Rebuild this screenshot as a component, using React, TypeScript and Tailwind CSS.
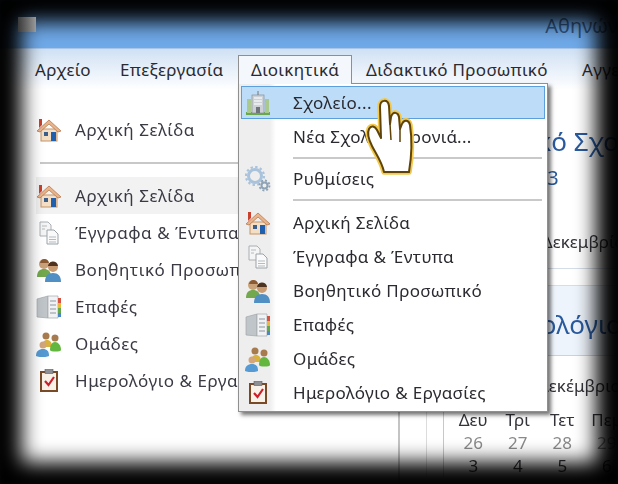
const font = "font-['Noto_Sans','Open_Sans',sans-serif]";

function HomeIcon() {
  return (
    <svg width="26" height="26" viewBox="0 0 26 26" className="shrink-0">
      <rect x="5" y="12" width="16" height="12" fill="#f4dfc4" stroke="#c4946a" />
      <path d="M1 14 L13 3 L25 14 L22 15 L13 7 L4 15 Z" fill="#e8b48c" stroke="#b97a50" strokeWidth="0.8" />
      <path d="M3 2 h3 v6 l-3 3 Z" fill="#c9402c" />
      <rect x="8" y="15" width="4" height="4" fill="#3b5f8a" />
      <rect x="15" y="15" width="5" height="9" fill="#1f5fae" />
    </svg>
  );
}

function DocsIcon() {
  return (
    <svg width="26" height="26" viewBox="0 0 26 26" className="shrink-0">
      <path d="M4 2 h8 l3 3 v11 H4 Z" fill="#f5f5f5" stroke="#aab0b5" />
      <path d="M11 10 h7 l4 4 v10 H11 Z" fill="#fafafa" stroke="#9ca3a8" />
      <path d="M13 17 h7 M13 19.5 h7 M13 22 h7 M6 6 h5 M6 9 h3" stroke="#b5bbc0" />
    </svg>
  );
}

function HelpersIcon() {
  return (
    <svg width="26" height="26" viewBox="0 0 26 26" className="shrink-0">
      <circle cx="8" cy="7" r="5" fill="#c9a27a" />
      <path d="M8 2 a5 5 0 0 1 5 4 h-9 a5 5 0 0 1 4 -4" fill="#8a5a34" />
      <path d="M1 20 c0 -6 3 -8 7 -8 s7 2 7 8 Z" fill="#73a84e" />
      <circle cx="17" cy="10" r="5" fill="#c89a72" />
      <path d="M12 10 a5 5 0 0 1 10 -1 h-10" fill="#4d3220" />
      <path d="M9 25 c0 -6 3 -9 8 -9 s8 3 8 9 Z" fill="#4f8fc4" />
    </svg>
  );
}

function ContactsIcon() {
  return (
    <svg width="26" height="26" viewBox="0 0 26 26" className="shrink-0">
      <path d="M1 5 L12 2 V24 L1 23 Z" fill="#c0c5c9" stroke="#a0a6aa" strokeWidth="0.7" />
      <path d="M12 2 H22 V24 H12 Z" fill="#f1f2f3" stroke="#a0a6aa" strokeWidth="0.7" />
      <path d="M14 7 h6 M14 11 h6 M14 15 h6 M14 19 h6" stroke="#8b96a0" />
      <rect x="22" y="4" width="3" height="5" fill="#d8503f" />
      <rect x="22" y="9" width="3" height="5" fill="#e9b93a" />
      <rect x="22" y="14" width="3" height="5" fill="#63a84a" />
      <rect x="22" y="19" width="3" height="4" fill="#4b86c6" />
    </svg>
  );
}

function GroupsIcon() {
  return (
    <svg width="26" height="26" viewBox="0 0 26 26" className="shrink-0">
      <circle cx="10" cy="5" r="3.5" fill="#a77b4e" />
      <circle cx="19" cy="7" r="3.5" fill="#a77b4e" />
      <path d="M6 16 c0 -5 2 -7 5 -7 s5 2 5 7 Z" fill="#d8b23c" />
      <path d="M14 19 c0 -5 2 -8 5 -8 s6 3 6 8 c0 2 -11 2 -11 0" fill="#63b73f" />
      <circle cx="7" cy="14" r="3.5" fill="#d3a67c" />
      <path d="M0 25 c0 -5 3 -7 7 -7 s6 2 6 7 c-2 1.5 -11 1.5 -13 0" fill="#559ad2" />
    </svg>
  );
}

function ClipboardIcon() {
  return (
    <svg width="26" height="26" viewBox="0 0 26 26" className="shrink-0">
      <rect x="5" y="4" width="16" height="19" fill="#f8f2e8" stroke="#7a4a26" strokeWidth="2" />
      <rect x="9" y="1.5" width="8" height="4" fill="#8d9094" stroke="#5c5c5c" strokeWidth="0.6" />
      <path d="M9 13 L12.5 17 L18 9" fill="none" stroke="#d01f2a" strokeWidth="2.2" />
    </svg>
  );
}

function SchoolIcon() {
  return (
    <svg width="26" height="26" viewBox="0 0 26 26" className="shrink-0">
      <rect x="1" y="22" width="24" height="3" fill="#6aa84f" />
      <rect x="2" y="9" width="4" height="14" fill="#a9c98f" />
      <rect x="20" y="9" width="4" height="14" fill="#a9c98f" />
      <rect x="7" y="5" width="12" height="18" fill="#cdd1d5" stroke="#8b9196" strokeWidth="0.7" />
      <path d="M9 8 h8 M9 11 h8 M9 14 h8" stroke="#f1f3f5" strokeWidth="1.5" />
      <rect x="11" y="17" width="4" height="6" fill="#6e7479" />
      <rect x="12.5" y="1" width="1" height="4" fill="#777" />
    </svg>
  );
}

function GearsIcon() {
  return (
    <svg width="26" height="26" viewBox="0 0 26 26" className="shrink-0">
      <circle cx="10" cy="10" r="6.5" fill="none" stroke="#a9c3dc" strokeWidth="3" />
      <circle cx="10" cy="10" r="9" fill="none" stroke="#a9c3dc" strokeWidth="2.2" strokeDasharray="2.4 2.3" />
      <circle cx="19.5" cy="19.5" r="3" fill="none" stroke="#8ea3b5" strokeWidth="2" />
      <circle cx="19.5" cy="19.5" r="5" fill="none" stroke="#8ea3b5" strokeWidth="1.8" strokeDasharray="2 1.9" />
    </svg>
  );
}

const handPath =
  "M22 76 C20 66 14 58 10 50 C7 44 5 37 7 33 C9 29 13 30 15 34 L19 42 L18 11 C18 3 26 3 27 10 L28 28 L29 21 C31 15 36 16 37 21 L38 33 L40 28 C42 23 47 24 48 29 C50 42 50 58 47 76 Z";

function HandCursor() {
  return (
    <svg width="60" height="85" viewBox="0 0 60 85" className="absolute left-[362px] top-[96px]">
      <path d={handPath} fill="#ffffff" stroke="#f2c94c" strokeWidth="5.5" strokeLinejoin="round" />
      <path d={handPath} fill="#ffffff" stroke="#5f4308" strokeWidth="2" strokeLinejoin="round" />
      <path d="M28 28 L29 44 M38 33 L38 46" stroke="#5f4308" strokeWidth="1.5" fill="none" />
    </svg>
  );
}

const sideRows = [
  { icon: <HomeIcon />, label: "Αρχική Σελίδα", hover: true },
  { icon: <DocsIcon />, label: "Έγγραφα & Έντυπα" },
  { icon: <HelpersIcon />, label: "Βοηθητικό Προσωπικό" },
  { icon: <ContactsIcon />, label: "Επαφές" },
  { icon: <GroupsIcon />, label: "Ομάδες" },
  { icon: <ClipboardIcon />, label: "Ημερολόγιο & Εργασίες" },
];

const menuRows = [
  { icon: <HomeIcon />, label: "Αρχική Σελίδα" },
  { icon: <DocsIcon />, label: "Έγγραφα & Έντυπα" },
  { icon: <HelpersIcon />, label: "Βοηθητικό Προσωπικό" },
  { icon: <ContactsIcon />, label: "Επαφές" },
  { icon: <GroupsIcon />, label: "Ομάδες" },
  { icon: <ClipboardIcon />, label: "Ημερολόγιο & Εργασίες" },
];

function MenuRow({ icon, label, selected }: { icon?: React.ReactNode; label: string; selected?: boolean }) {
  return (
    <div
      className={
        selected
          ? "flex h-[33px] items-center border border-[#5b9fdc] bg-[#bcdcf8] pl-[3px]"
          : "flex h-[34px] items-center pl-[4px]"
      }
    >
      <div className="w-[48px] shrink-0">{icon}</div>
      <span className="text-[17px] tracking-[0.35px] whitespace-nowrap text-[#2a2a30]">{label}</span>
    </div>
  );
}

function MenuSep() {
  return <div className="my-[3px] ml-[52px] mr-[3px] h-[2px] bg-[#c9c9c9]" />;
}

export default function App() {
  return (
    <div className={`relative h-[484px] w-[618px] overflow-hidden bg-white ${font}`}>
      <div className="flex h-full flex-col blur-[0.4px]">
        <div className="flex h-[48px] shrink-0 justify-end bg-[#6fa9e8] pt-[16px]">
          <span className="text-[20px] leading-[20px] whitespace-nowrap text-[#2f5380]">Αθηνών</span>
        </div>

        <div className="flex h-[42px] shrink-0 items-start overflow-hidden border-t border-[#a9c6e8] bg-gradient-to-b from-[#d0e1f4] to-white pl-[35px] pt-[8px] text-[17px] tracking-[0.3px] whitespace-nowrap text-[#2a2a30]">
          <span className="w-[85px] shrink-0">Αρχείο</span>
          <span className="w-[246px] shrink-0">Επεξεργασία</span>
          <span className="w-[216px] shrink-0">Διδακτικό Προσωπικό</span>
          <span>Αγγελίες</span>
        </div>

        <div className="flex min-h-0 flex-1">
          <aside className="w-[400px] shrink-0 border-r-2 border-[#c4c4c4] pl-[36px]">
            <div className="mt-[20px] flex h-[36px] items-center gap-[13px] pt-[4px]">
              <HomeIcon />
              <span className="text-[17px] tracking-[0.55px] text-[#3a3a44]">Αρχική Σελίδα</span>
            </div>
            <div className="mb-[13px] ml-[4px] mt-[16px] h-[2px] bg-[#c8c8c8]" />
            {sideRows.map((row) => (
              <div
                key={row.label}
                className={`flex h-[37px] items-center gap-[13px] ${row.hover ? "bg-[#f2f2f2]" : ""}`}
              >
                {row.icon}
                <span className="text-[17px] tracking-[0.55px] whitespace-nowrap text-[#3a3a44]">{row.label}</span>
              </div>
            ))}
          </aside>

          <main className="min-w-0 flex-1 overflow-hidden">
            <div className="pl-[52px] pt-[32px] text-[26px] leading-[38px] whitespace-nowrap text-[#2a5a9e]">Δημοτικό Σχολείο</div>
            <div className="pl-[113px] text-[20px] leading-[36px] text-[#2a5a9e]">2013</div>
            <div className="pl-[118px] pt-[34px] text-[17px] leading-[24px] whitespace-nowrap text-[#33333a]">21 Δεκεμβρίου</div>
            <div className="mt-[14px] h-[18px] border-y border-[#d5dde6]" />
            <div className="h-[70px] border-b border-[#c9d3de] bg-[#eef4fb] pl-[78px] pt-[20px] text-[26px] leading-[36px] whitespace-nowrap text-[#2a5a9e]">
              Ημερολόγιο
            </div>
            <div className="flex">
              <div className="w-[27px] shrink-0 border-r border-[#dcdcdc]" />
              <div className="w-[17px] shrink-0 border-r border-[#c8c8c8]" />
              <div className="min-w-0 pl-[7px]">
                <div className="pl-[87px] pt-[18px] text-[17px] leading-[24px] whitespace-nowrap text-[#33333a]">Δεκέμβριος</div>
                <div className="grid w-[178px] grid-cols-4 pt-[10px] text-center text-[17px] leading-[23px] text-[#33333a]">
                  <span>Δευ</span><span>Τρι</span><span>Τετ</span><span>Πεμ</span>
                  <span className="text-[#8a8a8a]">26</span><span className="text-[#8a8a8a]">27</span><span className="text-[#8a8a8a]">28</span><span className="text-[#8a8a8a]">29</span>
                  <span>3</span><span>4</span><span>5</span><span>6</span>
                </div>
              </div>
            </div>
          </main>
        </div>

        {/* open menu */}
        <div className="absolute left-[238px] top-[55px] z-10 flex h-[29px] w-[114px] items-center border border-b-0 border-[#8f8f8f] bg-[#f4f8fc] pl-[12px] text-[17px] tracking-[0.3px] text-[#2a2a30]">
          Διοικητικά
        </div>
        <div className="absolute left-[238px] top-[83px] h-[329px] w-[310px] border border-[#8f8f8f] bg-gradient-to-r from-[#eeeeee] from-[10%] to-white to-[12%] p-[2px] shadow-[3px_3px_4px_rgba(0,0,0,0.55)]">
          <MenuRow icon={<SchoolIcon />} label="Σχολείο..." selected />
          <div className="pt-[1px]"><MenuRow label="Νέα Σχολική Χρονιά..." /></div>
          <MenuSep />
          <MenuRow icon={<GearsIcon />} label="Ρυθμίσεις" />
          <MenuSep />
          <div className="pt-[2px]">
            {menuRows.map((row) => (
              <MenuRow key={row.label} icon={row.icon} label={row.label} />
            ))}
          </div>
        </div>
        <HandCursor />
      </div>

      {/* dark vignette round the window */}
      <div className="pointer-events-none absolute inset-0 shadow-[inset_0_0_20px_22px_#000]" />
      <div className="absolute left-[18px] top-[17px] h-[15px] w-[18px] bg-gradient-to-r from-[#3a3a3a] to-[#9a9a9a] blur-[0.5px]" />
    </div>
  );
}
